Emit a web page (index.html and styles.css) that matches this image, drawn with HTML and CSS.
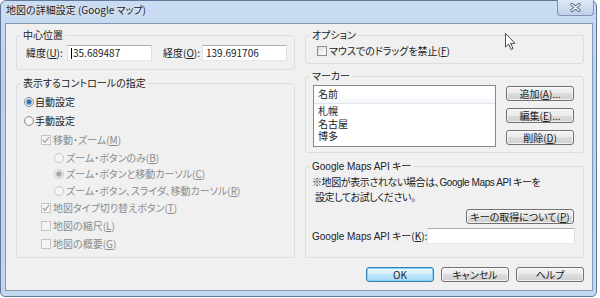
FILE: index.html
```html
<!DOCTYPE html>
<html lang="ja">

<head>
    <meta charset="UTF-8">
    <meta name="viewport" content="width=device-width, initial-scale=1.0">
    <title>地図の詳細設定 (Google マップ)</title>
    <link rel="stylesheet" href="styles.css">
</head>

<body>
    <div class="window">
        <div class="titlebar">
            <span class="title">地図の詳細設定 (Google マップ)</span>
            <div class="close-btn">
                <svg width="11" height="9" viewBox="0 0 11 9">
                    <path d="M2 1.5 L9 7.5 M9 1.5 L2 7.5" stroke="#5a6476" stroke-width="3.2" stroke-linecap="round" />
                    <path d="M2 1.5 L9 7.5 M9 1.5 L2 7.5" stroke="#ffffff" stroke-width="1.4" stroke-linecap="round" />
                </svg>
            </div>
        </div>

        <div class="client">
            <div class="columns">
                <div class="column">
                    <div class="group group-center">
                        <div class="group-label">中心位置</div>
                        <div class="coord-row">
                            <span class="coord-label lat-label">緯度(<u>U</u>):</span>
                            <div class="textbox coord-box"><span class="caret"></span>35.689487</div>
                            <span class="coord-label lng-label">経度(<u>O</u>):</span>
                            <div class="textbox coord-box">139.691706</div>
                        </div>
                    </div>

                    <div class="group group-controls">
                        <div class="group-label">表示するコントロールの指定</div>
                        <div class="options">
                            <div class="option row-auto"><span class="radio checked"></span>自動設定</div>
                            <div class="option row-manual"><span class="radio"></span>手動設定</div>
                            <div class="option row-move disabled indent-1"><span class="check checked"><svg width="8" height="8" viewBox="0 0 8 8"><path d="M1 4 L3 6.3 L7 1.2" fill="none" stroke="#a4a4a4" stroke-width="1.3" /></svg></span>移動・ズーム(<u>M</u>)</div>
                            <div class="option row-sub disabled indent-2"><span class="radio"></span>ズーム・ボタンのみ(<u>B</u>)</div>
                            <div class="option row-sub disabled indent-2"><span class="radio checked"></span>ズーム・ボタンと移動カーソル(<u>C</u>)</div>
                            <div class="option row-sub-last disabled indent-2"><span class="radio"></span>ズーム・ボタン、スライダ、移動カーソル(<u>R</u>)</div>
                            <div class="option row-check disabled indent-1"><span class="check checked"><svg width="8" height="8" viewBox="0 0 8 8"><path d="M1 4 L3 6.3 L7 1.2" fill="none" stroke="#a4a4a4" stroke-width="1.3" /></svg></span>地図タイプ切り替えボタン(<u>T</u>)</div>
                            <div class="option row-check disabled indent-1"><span class="check"></span>地図の縮尺(<u>L</u>)</div>
                            <div class="option row-check disabled indent-1"><span class="check"></span>地図の概要(<u>G</u>)</div>
                        </div>
                    </div>
                </div>

                <div class="column">
                    <div class="group group-option">
                        <div class="group-label">オプション</div>
                        <div class="option option-drag"><span class="check enabled"></span>マウスでのドラッグを禁止(<u>F</u>)</div>
                    </div>

                    <div class="group group-marker">
                        <div class="group-label">マーカー</div>
                        <div class="marker-body">
                            <div class="listbox">
                                <div class="list-header">名前</div>
                                <div class="list-rows">
                                    <div class="list-row">札幌</div>
                                    <div class="list-row">名古屋</div>
                                    <div class="list-row">博多</div>
                                </div>
                            </div>
                            <div class="marker-buttons">
                                <div class="button">追加(<u>A</u>)...</div>
                                <div class="button">編集(<u>E</u>)...</div>
                                <div class="button">削除(<u>D</u>)</div>
                            </div>
                        </div>
                    </div>

                    <div class="group group-api">
                        <div class="group-label"><span class="latin">Google Maps API</span> キー</div>
                        <div class="api-note">
                            <div>※地図が表示されない場合は、<span class="latin">Google Maps API</span> キーを</div>
                            <div class="api-note-second">設定してお試しください。</div>
                        </div>
                        <div class="api-link-row">
                            <div class="button api-link">キーの取得について(<u>P</u>)</div>
                        </div>
                        <div class="api-key-row">
                            <span class="api-key-label"><span class="latin">Google Maps API</span> キー(<u>K</u>):</span>
                            <div class="textbox api-key-box"></div>
                        </div>
                    </div>
                </div>
            </div>

            <div class="actions">
                <div class="button default">OK</div>
                <div class="button">キャンセル</div>
                <div class="button">ヘルプ</div>
            </div>
        </div>
    </div>

    <svg class="cursor" width="12" height="18" viewBox="0 0 12 18">
        <path d="M0.5 0.5 L0.5 14 L3.6 11 L6 16.5 L8 15.6 L5.7 10.3 L10 10.3 Z" fill="#ffffff" stroke="#4a4a4a" stroke-width="1" stroke-linejoin="round" />
    </svg>
</body>

</html>
```

FILE: styles.css
```css
* {
    box-sizing: border-box;
}

body {
    margin: 0;
    width: 600px;
    height: 298px;
    overflow: hidden;
    position: relative;
    background-color: #ffffff;
    font-family: "Noto Sans CJK JP", "Noto Sans", sans-serif;
    font-size: 10px;
    line-height: 12px;
    color: #222222;
    font-feature-settings: "palt";
}

u {
    text-decoration: underline;
    text-underline-offset: 1px;
}

.latin {
    font-family: "Liberation Sans", Arial, sans-serif;
}

/* window frame */
.window {
    width: 597px;
    height: 297px;
    border: 1px solid #62789a;
    border-radius: 6px 6px 5px 5px;
    background: linear-gradient(#cadcf2, #bcd1ea 30%, #c3d7ee);
    padding: 0 3px 5px 4px;
    display: flex;
    flex-direction: column;
}

.titlebar {
    height: 22px;
    display: flex;
    align-items: flex-start;
}

.title {
    margin: 2px 0 0 1px;
    line-height: 14px;
    color: #1a1a1a;
    text-shadow: 0 0 3px rgba(255, 255, 255, 0.8);
}

.close-btn {
    margin: -1px -1px 0 auto;
    width: 37px;
    height: 16px;
    border: 1px solid #8294b0;
    border-top: none;
    border-radius: 0 0 4px 4px;
    background: linear-gradient(#dfe9f6, #cddcef 50%, #bfd1e9);
    display: flex;
    align-items: center;
    justify-content: center;
}

.client {
    height: 268px;
    border: 1px solid #8398b6;
    background-color: #f0f0f0;
    display: flex;
    flex-direction: column;
}

.columns {
    display: grid;
    grid-template-columns: 279px 279px;
    column-gap: 10px;
    padding: 11px 0 0 10px;
}

.column {
    display: flex;
    flex-direction: column;
}

/* group boxes */
.group {
    border: 1px solid #d5dfe5;
    border-radius: 3px;
}

.group-label {
    margin: -7px 0 0 4px;
    padding: 0 2px;
    width: fit-content;
    height: 12px;
    background-color: #f0f0f0;
    white-space: nowrap;
}

.group-center {
    height: 35px;
}

.group-controls {
    margin-top: 13px;
    height: 175px;
}

.group-option {
    height: 29px;
}

.group-marker {
    margin-top: 12px;
    height: 77px;
}

.group-api {
    margin-top: 13px;
    height: 92px;
}

/* centre position */
.coord-row {
    display: flex;
    align-items: center;
    height: 16px;
    margin: 4px 0 0 9px;
}

.coord-label {
    white-space: nowrap;
}

.lat-label {
    width: 41px;
}

.lng-label {
    width: 39px;
    margin-left: 11px;
}

.textbox {
    height: 16px;
    background-color: #ffffff;
    border: 1px solid;
    border-color: #abadb3 #dbdfe6 #e3e9ef #e2e3ea;
    padding-left: 4px;
    display: flex;
    align-items: center;
}

.coord-box {
    width: 85px;
    padding-left: 3px;
}

.caret {
    width: 1px;
    height: 11px;
    background-color: #000000;
    margin-right: 1px;
}

/* radio and check options */
.options {
    margin: 3px 0 0 7px;
}

.option {
    display: flex;
    align-items: center;
    height: 18px;
    white-space: nowrap;
}

.option.disabled {
    color: #8c8c8c;
}

.row-auto,
.row-manual {
    height: 19px;
}

.row-move {
    height: 20px;
}

.row-sub {
    height: 16px;
}

.row-sub-last {
    height: 17px;
}

.indent-1 {
    padding-left: 17px;
}

.indent-2 {
    padding-left: 30px;
}

.radio {
    width: 10px;
    height: 10px;
    border: 1px solid #8e8f8f;
    border-radius: 50%;
    background: radial-gradient(circle, #ffffff 0, #e6e6e6 100%);
    margin-right: 1px;
    flex-shrink: 0;
}

.radio.checked {
    background: radial-gradient(circle, #1b4f86 0, #3f89c6 2px, #9cc6e8 3px, #f0f0f0 3.6px);
}

.disabled .radio {
    border-color: #c8c8c8;
    background: #f4f4f4;
    margin-right: 2px;
}

.disabled .radio.checked {
    background: radial-gradient(circle, #9c9c9c 0, #b4b4b4 2.5px, #f4f4f4 3.5px);
}

.check {
    width: 10px;
    height: 10px;
    border: 1px solid #8e8f8f;
    background: linear-gradient(135deg, #dcdcdc, #ffffff);
    margin-right: 2px;
    flex-shrink: 0;
    display: flex;
    align-items: center;
    justify-content: center;
}

.disabled .check {
    border-color: #c4c4c4;
    background: #f4f4f4;
}

.option-drag {
    margin: 1px 0 0 11px;
}

/* marker list */
.marker-body {
    display: flex;
    align-items: flex-start;
    margin: 3px 0 0 7px;
}

.listbox {
    width: 183px;
    height: 62px;
    border: 1px solid #828790;
    background-color: #ffffff;
}

.list-header {
    height: 18px;
    padding-left: 4px;
    line-height: 16px;
    background: linear-gradient(#ffffff, #ffffff 50%, #f3f5f8);
    border-bottom: 1px solid #e2e5ea;
}

.list-rows {
    padding-top: 1px;
}

.list-row {
    height: 12px;
    padding-left: 4px;
    line-height: 12px;
}

.list-row:first-child {
    height: 13px;
}

.marker-buttons {
    display: flex;
    flex-direction: column;
    gap: 7px;
    margin: 1px 0 0 10px;
}

/* buttons */
.button {
    width: 68px;
    height: 15px;
    border: 1px solid #707070;
    border-radius: 3px;
    background: linear-gradient(#f2f2f2, #ebebeb 50%, #dddddd 50%, #cfcfcf);
    box-shadow: inset 0 0 0 1px rgba(255, 255, 255, 0.7);
    display: flex;
    align-items: center;
    justify-content: center;
    line-height: 12px;
    white-space: nowrap;
}

.button.default {
    border-color: #3c7fb1;
    background: linear-gradient(#eaf6fd, #d9f0fc 50%, #bee6fd 50%, #a7d9f5);
    box-shadow: inset 0 0 0 1px #7fd3f7;
}

/* api key */
.api-note {
    margin: 3px 0 0 6px;
    line-height: 14px;
    letter-spacing: -0.4px;
    white-space: nowrap;
}

.api-note-second {
    padding-left: 3px;
}

.api-link-row {
    display: flex;
    justify-content: flex-end;
    margin: 5px 9px 0 0;
}

.api-link {
    width: 108px;
}

.api-key-row {
    display: flex;
    align-items: center;
    justify-content: space-between;
    height: 16px;
    margin: 4px 8px 0 6px;
}

.api-key-label {
    white-space: nowrap;
}

.api-key-box {
    width: 148px;
}

/* dialog buttons */
.actions {
    display: flex;
    justify-content: flex-end;
    gap: 7px;
    margin-top: 9px;
    padding-right: 8px;
}

.cursor {
    position: absolute;
    left: 505px;
    top: 33px;
}
```
